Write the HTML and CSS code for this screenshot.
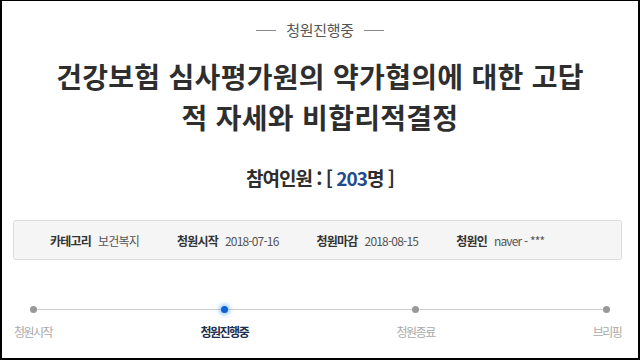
FILE: index.html
```html
<!DOCTYPE html>
<html lang="ko">
<head>
    <meta charset="UTF-8">
    <meta name="viewport" content="width=device-width, initial-scale=1.0">
    <title>청원진행중</title>
    <link rel="stylesheet" href="styles.css">
</head>
<body>
    <div class="page">
        <div class="status">
            <span class="status-line"></span>
            <span class="status-text">청원진행중</span>
            <span class="status-line"></span>
        </div>
        <h1 class="title">건강보험 심사평가원의 약가협의에 대한 고답<br>적 자세와 비합리적결정</h1>
        <div class="count">참여인원 : [ <span class="count-num">203</span>명 ]</div>
        <div class="info">
            <div class="info-item"><span class="info-label">카테고리</span><span class="info-value">보건복지</span></div>
            <div class="info-item"><span class="info-label">청원시작</span><span class="info-value">2018-07-16</span></div>
            <div class="info-item"><span class="info-label">청원마감</span><span class="info-value">2018-08-15</span></div>
            <div class="info-item"><span class="info-label">청원인</span><span class="info-value">naver - ***</span></div>
        </div>
        <div class="steps">
            <div class="step">
                <span class="dot"></span>
                <span class="step-label">청원시작</span>
            </div>
            <div class="step active">
                <span class="dot"></span>
                <span class="step-label">청원진행중</span>
            </div>
            <div class="step">
                <span class="dot"></span>
                <span class="step-label">청원종료</span>
            </div>
            <div class="step">
                <span class="dot"></span>
                <span class="step-label">브리핑</span>
            </div>
        </div>
    </div>
</body>
</html>
```

FILE: styles.css
```css
/* Reset default styles */
* {
    margin: 0;
    padding: 0;
    box-sizing: border-box;
}
body {
    font-family: "Noto Sans CJK KR", "Noto Sans", sans-serif;
    background-color: #fff;
    color: #333;
}
.page {
    width: 640px;
    height: 360px;
    border: solid #000;
    border-width: 1px 2px 2px 2px;
    overflow: hidden;
}
.status {
    display: flex;
    justify-content: center;
    align-items: center;
    gap: 10px;
    padding-top: 19px;
    height: 39px;
}
.status-line {
    width: 20px;
    height: 1px;
    background-color: #888;
}
.status-text {
    font-size: 15px;
    line-height: 20px;
    letter-spacing: -0.3px;
    color: #555;
}
.title {
    margin-top: 16px;
    text-align: center;
    font-size: 28px;
    font-weight: 700;
    line-height: 41px;
    letter-spacing: 0.3px;
    color: #2e2e2e;
}
.count {
    margin-top: 26px;
    text-align: center;
    font-size: 19px;
    font-weight: 700;
    line-height: 28px;
    letter-spacing: -1px;
    color: #2e2e2e;
}
.count-num {
    color: #1f4b8f;
}
.info {
    display: flex;
    align-items: center;
    gap: 38px;
    height: 40px;
    margin: 28px 16px 0 11px;
    padding-left: 36px;
    background-color: #f5f5f5;
    border: 1px solid #dcdcdc;
    border-radius: 3px;
    font-size: 12px;
    letter-spacing: -0.8px;
}
.info-label {
    font-weight: 700;
    color: #333;
}
.info-value {
    margin-left: 7px;
    color: #555;
}
.steps {
    position: relative;
    display: flex;
    justify-content: space-between;
    margin: 46px 1px 0 1px;
}
.steps::before {
    content: "";
    position: absolute;
    left: 30px;
    right: 30px;
    top: 3px;
    height: 1px;
    background-color: #cdcdcd;
}
.step {
    width: 60px;
    display: flex;
    flex-direction: column;
    align-items: center;
}
.dot {
    position: relative;
    width: 7px;
    height: 7px;
    border-radius: 50%;
    background-color: #999;
}
.step.active .dot {
    background-color: #0b63cf;
    box-shadow: 0 0 4px 2px rgba(40, 140, 255, 0.45);
}
.step-label {
    margin-top: 11px;
    font-size: 12px;
    line-height: 16px;
    letter-spacing: -1.5px;
    color: #aaa;
    white-space: nowrap;
}
.step.active .step-label {
    font-weight: 700;
    color: #1c2f4e;
}
```
